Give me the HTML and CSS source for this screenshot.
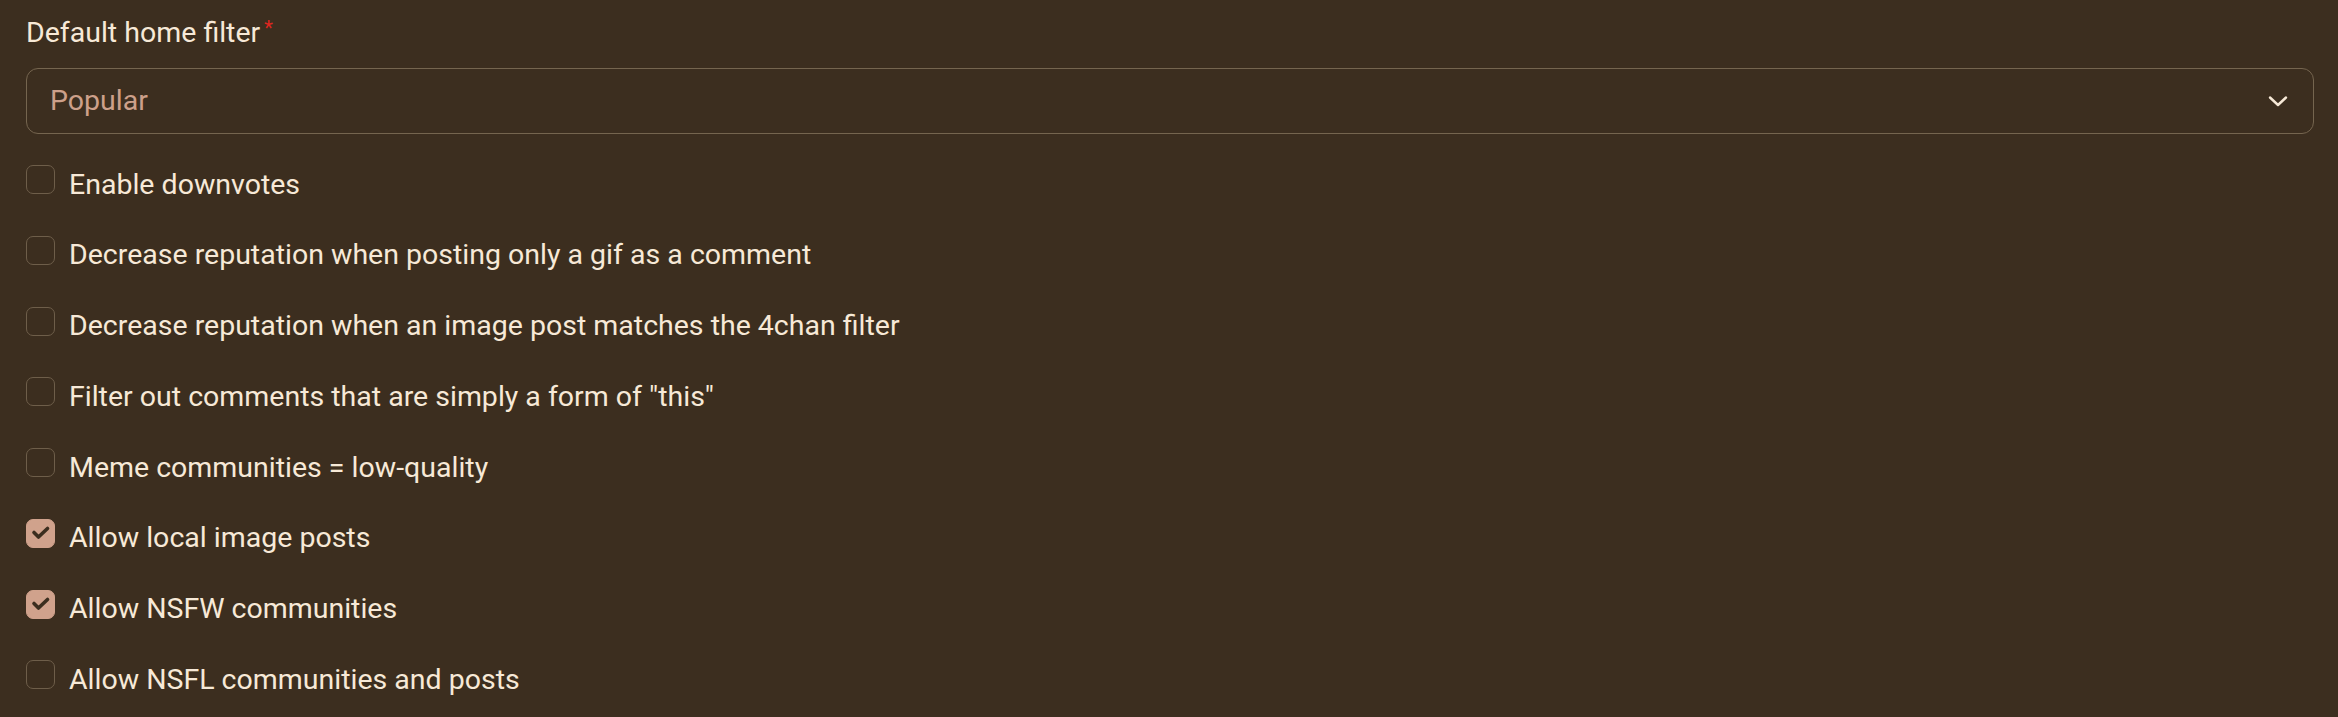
FILE: index.html
```html
<!DOCTYPE html>
<html lang="en">
<head>
<meta charset="utf-8">
<title>Settings</title>
<link rel="stylesheet" href="styles.css">
</head>
<body>
<div class="settings">
  <div class="field">
    <label class="field-label">Default home filter<span class="required">*</span></label>
    <div class="select">
      <span class="select-value">Popular</span>
      <svg class="chevron" width="20" height="13" viewBox="0 0 20 13"><path d="M2 2.5 L10 10 L18 2.5" fill="none" stroke="currentColor" stroke-width="2.4" stroke-linecap="round" stroke-linejoin="round"/></svg>
    </div>
  </div>
  <div class="checks">
    <label class="check"><span class="box"></span><span class="check-text">Enable downvotes</span></label>
    <label class="check"><span class="box"></span><span class="check-text">Decrease reputation when posting only a gif as a comment</span></label>
    <label class="check"><span class="box"></span><span class="check-text">Decrease reputation when an image post matches the 4chan filter</span></label>
    <label class="check"><span class="box"></span><span class="check-text">Filter out comments that are simply a form of "this"</span></label>
    <label class="check"><span class="box"></span><span class="check-text">Meme communities = low-quality</span></label>
    <label class="check"><span class="box checked"><svg width="29" height="29" viewBox="0 0 29 29"><path d="M8 14.5 L12.5 19 L21.5 10.5" fill="none" stroke="currentColor" stroke-width="3.6" stroke-linecap="round" stroke-linejoin="round"/></svg></span><span class="check-text">Allow local image posts</span></label>
    <label class="check"><span class="box checked"><svg width="29" height="29" viewBox="0 0 29 29"><path d="M8 14.5 L12.5 19 L21.5 10.5" fill="none" stroke="currentColor" stroke-width="3.6" stroke-linecap="round" stroke-linejoin="round"/></svg></span><span class="check-text">Allow NSFW communities</span></label>
    <label class="check"><span class="box"></span><span class="check-text">Allow NSFL communities and posts</span></label>
  </div>
</div>
</body>
</html>
```
FILE: styles.css
```css
html, body {
  margin: 0;
  padding: 0;
  background: #3c2e1f;
}
body {
  font-family: Roboto, "Liberation Sans", sans-serif;
  font-size: 28.5px;
  line-height: 42.75px;
  color: #f7e9d7;
}
.settings {
  padding: 12px 24px 0 26px;
}
.field-label {
  display: block;
  margin-bottom: 13.25px;
}
.required {
  color: #e0261f;
  font-size: 20px;
  vertical-align: top;
  position: relative;
  top: -5px;
  margin-left: 4px;
}
.select {
  box-sizing: border-box;
  height: 66px;
  border: 1.5px solid #75654f;
  border-radius: 12px;
  display: flex;
  align-items: center;
  justify-content: space-between;
  padding: 0 25px 0 23px;
}
.select-value {
  color: #cda08a;
}
.chevron {
  color: #f7e9d7;
  display: block;
}
.checks {
  display: flex;
  flex-direction: column;
  gap: 28px;
  margin-top: 29.5px;
}
.check {
  display: flex;
  align-items: flex-start;
  gap: 14px;
}
.box {
  box-sizing: border-box;
  flex: none;
  width: 29px;
  height: 29px;
  margin-top: 1.5px;
  border: 1.5px solid #6e5e4a;
  border-radius: 7px;
  position: relative;
}
.box.checked {
  background: #d0a28c;
  border-color: #d0a28c;
  color: #3c2e1f;
}
.box svg {
  display: block;
  position: absolute;
  left: -1.5px;
  top: -1.5px;
}
```
